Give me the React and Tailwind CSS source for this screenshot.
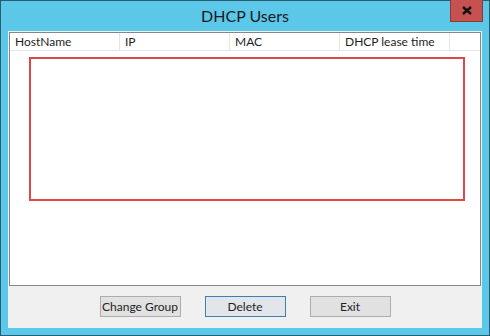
import React from "react";

const columns = ["HostName", "IP", "MAC", "DHCP lease time"];

function ListHeader() {
  return (
    <div className="flex h-[18px] border-b border-[#e5e5e5] bg-white">
      {columns.map((col) => (
        <div
          key={col}
          className="w-[110px] shrink-0 border-r border-[#e5e5e5] pl-[5px] text-[12px] leading-[18px] text-[#1e1e1e]"
        >
          {col}
        </div>
      ))}
      <div className="flex-1" />
    </div>
  );
}

function WinButton({ label, focused }) {
  return (
    <button
      className={`h-[21px] w-[81px] whitespace-nowrap border text-[12px] leading-[19px] text-[#1e1e1e] ${
        focused ? "border-[#3c7fb1] bg-[#e2e6ea]" : "border-[#adadad] bg-[#e1e1e1]"
      }`}
    >
      {label}
    </button>
  );
}

export default function App() {
  return (
    <div
      className="relative flex h-[336px] w-[490px] flex-col border border-[#2a5d70] bg-[#5bc7e9]"
      style={{ fontFamily: 'Lato, "Noto Sans", sans-serif' }}
    >
      {/* title bar */}
      <div className="flex h-[30px] shrink-0 items-center justify-center">
        <span className="text-[16px] text-[#1a1a1a]">DHCP Users</span>
      </div>
      <button className="absolute right-[6px] top-[-1px] flex h-[22px] w-[33px] items-center justify-center border border-[#8c3a33] border-t-0 bg-[#c75050]">
        <svg width="10" height="9" viewBox="0 0 10 9">
          <path d="M1 1 L9 8 M9 1 L1 8" stroke="#111" strokeWidth="2.4" />
        </svg>
      </button>

      {/* client area */}
      <div className="mx-[7px] mb-[7px] flex flex-1 flex-col bg-[#f0f0f0] p-px">
        <div className="flex h-[254px] flex-col border border-[#828790] bg-white">
          <ListHeader />
          <div className="flex-1 pl-[19px] pt-[6px] pr-[15px]">
            <div className="h-[144px] w-[436px] border-2 border-[#e04848]" />
          </div>
        </div>
        <div className="flex flex-1 items-center justify-center gap-[24px] pb-px">
          <WinButton label="Change Group" />
          <WinButton label="Delete" focused />
          <WinButton label="Exit" />
        </div>
      </div>
    </div>
  );
}
